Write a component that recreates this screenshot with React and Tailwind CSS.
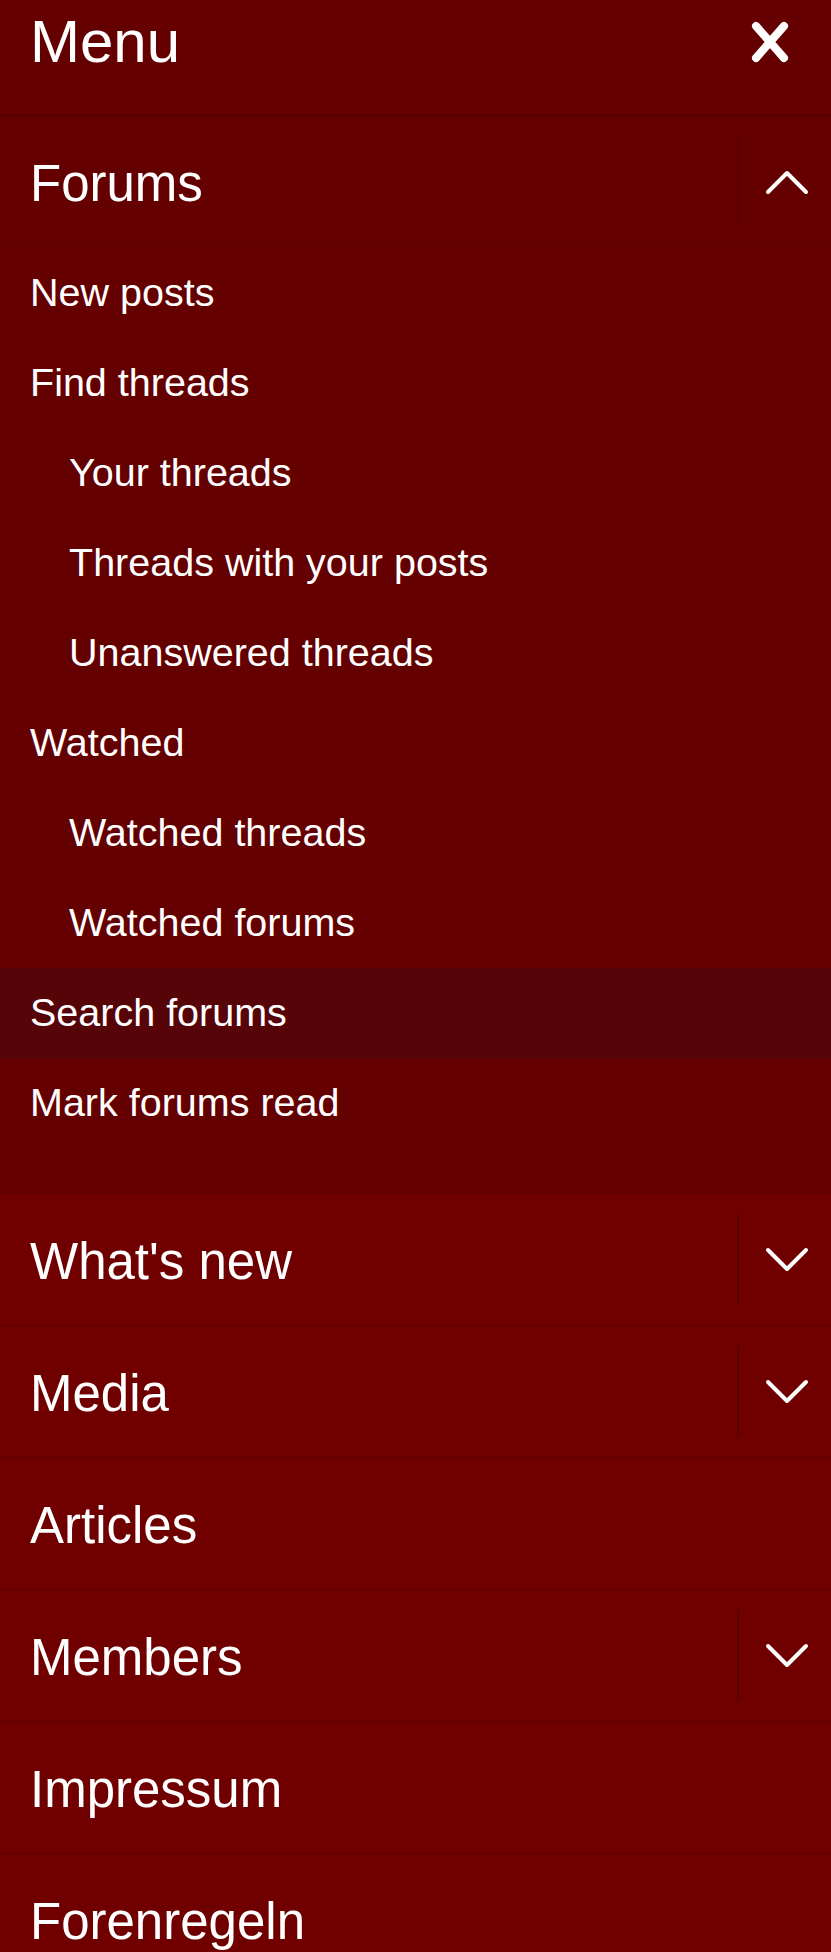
import { useState } from 'react';

const forumLinks = [
  { label: 'New posts', depth: 0 },
  { label: 'Find threads', depth: 0 },
  { label: 'Your threads', depth: 1 },
  { label: 'Threads with your posts', depth: 1 },
  { label: 'Unanswered threads', depth: 1 },
  { label: 'Watched', depth: 0 },
  { label: 'Watched threads', depth: 1 },
  { label: 'Watched forums', depth: 1 },
  { label: 'Search forums', depth: 0, active: true },
  { label: 'Mark forums read', depth: 0 },
];

const sections = [
  { label: "What's new", toggle: true },
  { label: 'Media', toggle: true },
  { label: 'Articles' },
  { label: 'Members', toggle: true },
  { label: 'Impressum' },
  { label: 'Forenregeln' },
];

function Chevron({ up }) {
  return (
    <svg width="44" height="26" viewBox="0 0 44 26" fill="none">
      <path
        d={up ? 'M3 23 L22 4 L41 23' : 'M3 3 L22 22 L41 3'}
        stroke="white"
        strokeWidth="4"
        strokeLinecap="round"
        strokeLinejoin="round"
      />
    </svg>
  );
}

function NavRow({ label, toggle, open, dark }) {
  return (
    <div
      className={`flex h-[132px] items-stretch border-b border-[#5c0000] ${
        dark ? 'bg-[#650000]' : 'bg-[#700000]'
      }`}
    >
      <a className="flex flex-1 items-center pl-[30px] pt-[3px] text-[51px] leading-none text-white">
        {label}
      </a>
      {toggle && (
        <div className="flex w-[94px] items-center py-[20px]">
          <div className="h-full w-[2px] bg-[#5a0000]" />
          <div className="flex flex-1 items-center justify-center pl-[4px]">
            <Chevron up={open} />
          </div>
        </div>
      )}
    </div>
  );
}

export default function App() {
  const [open] = useState(true);

  return (
    <div className="h-[1952px] w-[831px] overflow-hidden bg-[#700000] font-['Liberation_Sans',Arial,sans-serif]">
      {/* header */}
      <div className="flex h-[116px] items-start justify-between border-b-2 border-[#580000] bg-[#650000] pl-[30px] pr-[42px] pt-[9px]">
        <span className="text-[60px] leading-[66px] text-white">Menu</span>
        <svg width="38" height="42" viewBox="0 0 38 42" className="mt-[12px]">
          <path
            d="M5 5 L33 37 M33 5 L5 37"
            stroke="white"
            strokeWidth="8"
            strokeLinecap="round"
          />
        </svg>
      </div>

      <NavRow label="Forums" toggle open={open} dark />

      <div className="bg-[#650000] pb-[46px]">
        {forumLinks.map((item) => (
          <a
            key={item.label}
            className={`flex h-[90px] items-center text-[39.5px] leading-none text-white ${
              item.depth ? 'pl-[69px]' : 'pl-[30px]'
            } ${item.active ? 'bg-[#560407]' : ''}`}
          >
            {item.label}
          </a>
        ))}
      </div>

      {sections.map((s) => (
        <NavRow key={s.label} label={s.label} toggle={s.toggle} />
      ))}
    </div>
  );
}
